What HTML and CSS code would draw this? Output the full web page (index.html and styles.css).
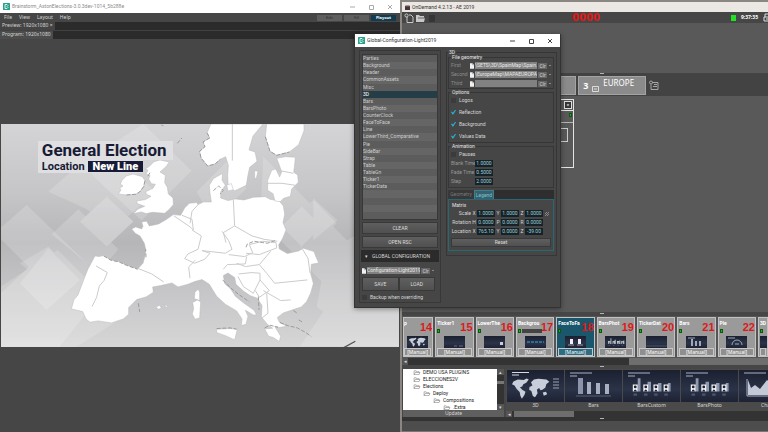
FILE: index.html
```html
<!DOCTYPE html>
<html lang="en">
<head>
<meta charset="utf-8">
<title>Playout desktop</title>
<link rel="stylesheet" href="styles.css">
</head>
<body>
<svg class="defs" aria-hidden="true">
  <defs>
    <linearGradient id="navy" x1="0" y1="0" x2="0" y2="1"><stop offset="0" stop-color="#1b2030"/><stop offset=".6" stop-color="#2b3348"/><stop offset="1" stop-color="#1d2233"/></linearGradient>
    <symbol id="logo" viewBox="0 0 14 14"><rect width="14" height="14" rx="1" fill="#27a18a"/><path d="M4 3h4l2 2-2 2 2 2-2 2H4z" fill="none" stroke="#d9f3ec" stroke-width="2"/></symbol>
    <symbol id="file" viewBox="0 0 10 14"><path d="M0 0h6l4 4v10H0z" fill="#f2f2f2"/><path d="M6 0v4h4" fill="none" stroke="#777"/></symbol>
    <symbol id="folder" viewBox="0 0 16 12"><path d="M1 11V2h5l1 2h6v2M1 11l3-5h11l-2 5z" fill="#fff" stroke="#777" stroke-width="1.3"/></symbol>
    <symbol id="worldmap" viewBox="0 0 100 60"><path d="M2 12l12-5 16 1 8-4 6 3-7 9-8 4-3 6-6 2 6 7 9 5-3 9-7 10-4-8-2-10-8-8-6-10-7-3zM50 14l8-7 12-2 22 2 8 6-8 6-3 10-8 6-5 1-4-6-6 5 2 9-7 11-6-3-4-14-6-3 1-8 8-4zM82 42l9-2 3 7-9 4z" fill="#c9cedb"/></symbol>
    <symbol id="people" viewBox="0 0 120 60"><g fill="#8e98ae"><path d="M22 2h8v38h-8zM50 12h10v28H50zM80 16h10v24H80zM108 16h8v24h-8z"/></g><g fill="#f2f3f6"><path d="M8 20h14v20H8zM38 20h14v20H38zM67 20h14v20H67zM96 20h14v20H96z"/></g><g fill="#1d2233"><circle cx="15" cy="27" r="4"/><circle cx="45" cy="27" r="4"/><circle cx="74" cy="27" r="4"/><circle cx="103" cy="27" r="4"/><path d="M10 40q5-12 10 0zM40 40q5-12 10 0zM69 40q5-12 10 0zM98 40q5-12 10 0z"/></g><path d="M10 46h10v6H10zM40 46h10v6H40zM69 46h10v6H69zM98 46h10v6H98z" fill="#4b556d"/></symbol>
  </defs>
</svg>
<main class="desktop">
  <section class="window playout">
    <header class="titlebar">
      <svg class="logo"><use href="#logo"/></svg>
      <span class="title faint">Brainstorm_AstonElections-3.0.3dev-1014_5b288e</span>
      <svg class="winbtns" viewBox="0 0 45 8"><path d="M1 4h5M20.500 2.500h4v4h-4zM39 2l4 4M43 2l-4 4" fill="none" stroke="#aaa"/></svg>
    </header>
    <nav class="menubar">
      <a href="#">File</a><a href="#">View</a><a href="#">Layout</a><a href="#">Help</a>
      <div class="modes"><button class="off">Edit</button><button class="off">Fill</button><button class="on">Playout</button></div>
    </nav>
    <div class="tabrow"><span class="viewtab">Preview: 1920x1080 ×</span></div>
    <div class="tabrow second"><span class="viewtab">Program: 1920x1080</span></div>
    <div class="stage">
      <div class="video">
        <svg class="map" viewBox="3 12 1194 672" preserveAspectRatio="none">
          <defs><linearGradient id="sky" x1="0" y1="0" x2="0" y2="1"><stop offset="0" stop-color="#d4d4d6"/><stop offset=".3" stop-color="#c6c6c8"/><stop offset=".53" stop-color="#b6b5b8"/><stop offset=".75" stop-color="#c6c6c8"/><stop offset="1" stop-color="#d6d6d7"/></linearGradient></defs>
          <rect x="3" y="12" width="1194" height="672" fill="url(#sky)"/>
          <g fill="#fff" fill-opacity=".17">
            <path d="M430 12l145 140-150 150-110-100-70-70zM80 255l280 270-130 60-230-230v-30zM145 385l150 150-120 150H3V520z"/>
            <path d="M320 230l80 75-80 75-80-75zM235 268l120 120-60 70-140-115zM145 215l170-150 150 150-120 110-90-60zM60 430l85-50 150 150-60 50zM3 500l170-110 200 200-150 95H3z"/>
            <path d="M590 215l90-90 60 80-100 100zM1195 130v210l-110-100zM940 240l70 70-70 70-80-70zM980 400l80-50 137 130v200h-100L950 560zM1000 530l197 150H900zM790 110l330 330-100 100-240-240z"/>
          </g>
          <g fill="#fff" fill-opacity=".18"><path d="M320 230l80 75-80 75-80-75zM905 260l60 60-60 60-60-60zM145 385l95 95-100 90-80-80zM940 235l72 66-72 60z"/></g>
          <g fill="#fff" stroke="#b9b9bc" stroke-width="1.500" stroke-linejoin="round">
            <path d="M462 125l18-5 28 6-10 14-18 16 16 10-2 22 8 14 3 20 14 12 1 20-12 14-14 12-36-3-20 4-14-5-24 5 14-14 20-8-22-8-2-8 26-4 17-10-14-6-2-8 22-10 7-12-12-2-8-14 4-10-12-6 6-10-8-4 12-8z"/>
            <path d="M365 182l14-14 20-6 28 8 8 12-4 18-12 16-12 7-28 2-24-3 8-12-4-6 10-6-8-6z"/>
            <path d="M285 408l12 2 14-3 22 13 24 5 22 10 34 12 16-17 6-22 2-20-4-18-7-12-6-10-14-8-11-13 12-6 18 6 4-8-4-13 15-2 8 14 28-6 24-14 20-14 22 2 12-22 14-14 22-2 4 6 16-8 24 0-4-26-2-24 12-20 28-16-2 20 10 16-14 20 0 18 22 8 22-5 26 3 28-8 36-2 14 8 28 5 12 15 4 25-5 25 9 22-10 25-12 20 2 12 24 14 34-8 14-8 32 10 6 16 8 18-22 4-2 28 8 30-8 28-12 26-16 16-24 8-30 10-18 14 6 14 22 12-22 4-14-4 18 30-4 16-18-12-14-4-12-22 24-2-16-12-18-22 2-34-14-22-22-8-20-14-22-20-4-20-20-14-14 8 4 24 18 16 14 22 22 18 34 24 8 14-10 0-24-14 8 18-6 24-14 4 2-20-16-24-34-20-26-24-22-36-22-14-22 6-20 8-30 8-18-12-34 8-24 4 2 16-22 14-28 8-24 24 0 20-16 14-36 12-40-6-24 4-12-10-10-22-34-8 8-28 12-14 18-48 12-30z"/>
            <path d="M633 12l-12 26 8 16-20 12 6 14-16 14 4 20 20 24 22-6 16-14 16-8 8 26-2 30 2 40 20 6 34-16 4-26 6-28 22-18-6-28-18-6 12-42 30-36z"/>
            <path d="M800 12l-4 38 14 44 20 12 38-10 28-22 16-42 0-20zM830 115l26-5 30 2-3 30-2 15 12 8 2 22-20 20-4 22-20 6-10 10-16-2-6-22-16-10 0-30 12-30 12-4 12 24 6-16-8-22z"/>
            <path d="M595 508l4 10 0 24-16-6 2-20zM578 548l14-8 10 6-3 48-14 4-8-16 4-16zM650 628l40-2 22 2-8 32-26-12-28-10zM764 152l10 2-6 24-4-6zM680 195l14-4 6 18-16 4zM468 562l10-6 6 8-8 4zM492 554l12 4-4 4z"/>
          </g>
          <g fill="none" stroke="#cbcbcf" stroke-width="3" stroke-linejoin="round">
            <path d="M697 12v110M800 190h46l40 6M830 150l50 10M700 240l4 78-34 20 8 30M704 318l52 30 36 10 40 6M570 310l6-36 22-24M522 288l50 34 8 8-4-32-30-12M576 330l28 18-10 40M594 388l-30 14-10 14 30 14 30-12 16-18-24-8 70 8 20-12-10-26-20-28M686 404l48 6 24-12-10-24 40-10 40 4 2 16-52 20-40-4M710 430l26 10 42-6 34-40M740 410l-4 22-54 2-12 14M778 434l22 26 24 30 98-10M716 462l40-4 24 2 0 20-20 40-30-20-16-30M780 480l28 32-30 20-12-20M790 512l52 30 30-2M800 520l4 60-26 20M900 375l24 40 6 44M415 446l40 16 36 24M288 438l34 20-10 24-14 16-8 34-14 28M570 475l-4-34 20-20"/>
          </g>
          <g fill="none" stroke="#909094" stroke-width="2.500" stroke-linejoin="round" stroke-dasharray="12 5">
            <path d="M311 408l22 13 24 5 22 10 34 12M438 412l-1-24M621 38l8 16-20 12 6 14-16 14 4 20 20 24 22-6 16-14M796 50l14 44 20 12 38-10M435 182l-4 18-12 16-12 7-28 2M450 158l-8 14M738 382l4-10 20-8 40 6 24-8M668 480l24 24 22 18 34 24M775 530l2 40M650 626l40-2 20 4M840 608l26 10 26 6 22 12 20 14M794 624l16-8 24 6M640 212l16-14 14 14-10 10M415 550l4 26M880 572l12 8M896 600l10 6"/>
            <path d="M532 70l14-16M484 15l6 2" />
            <path d="M1030 684l36-20" stroke="#555" stroke-width="4" stroke-dasharray="none"/>
          </g>
        </svg>
        <div class="caption">
          <h1>General Election</h1>
          <p><span>Location</span><strong>New Line</strong></p>
        </div>
      </div>
    </div>
  </section>

  <section class="window ondemand">
    <header class="titlebar beige">
      <svg class="logo dim" viewBox="0 0 14 14"><rect y="3" width="14" height="11" fill="#46333c"/><path d="M1 1h12v3H1z" fill="#84666d"/></svg>
      <span class="title">OnDemand 4.2.13 - AE 2019</span>
    </header>
    <div class="toolbar">
      <svg class="tools" viewBox="0 0 34 10"><g fill="none" stroke="#c8c8c8"><path d="M3 3.500V9.500h6V4l-2-2H5"/><circle cx="2.500" cy="2.500" r="1.600"/></g><path d="M12 2h3l1 1h4v2h1l-1 4h-8z" fill="#c8c8c8"/><path d="M14 5h7" stroke="#666"/><path d="M25 2h6v7h-6z" fill="#363636"/></svg>
      <output class="counter">0000</output>
      <div class="status"><i class="led big"></i><time>9:37:35</time><svg class="print" viewBox="0 0 5 9"><path d="M5 1H2v3H1v4h4M2 4h3M3 6h2" fill="none" stroke="#ddd"/></svg></div>
    </div>
    <div class="blank"></div>
    <div class="scenes">
      <i class="grip"></i>
      <div class="scenerow">
        <button class="scene blanktab" aria-label="Scene 2"></button>
        <button class="scene"><b>3</b><svg class="mini" viewBox="0 0 7 6"><path d="M.5.5h6v5h-6zM2 3h3" fill="none" stroke="#ddd"/></svg><span>EUROPE</span></button>
        <svg class="addscene" viewBox="0 0 10 10"><path d="M3 2.500h6v7H2v-5M5 4.500h3M4 6.500h4" fill="none" stroke="#a6a6a6"/><circle cx="2" cy="2.500" r="1.500" fill="none" stroke="#a6a6a6"/></svg>
      </div>
    </div>
    <div class="canvas">
      <div class="node"><div class="nodehead"><button class="nodeclose" aria-label="Close">×</button></div><div class="nodeled"><i class="led"></i></div><div class="nodebody"><div class="slot"></div></div></div>
    </div>
    <div class="splitter"><i class="grip"></i></div>
    <div class="cards">
      <article class="card first"><h2>p</h2><b>14</b><svg class="pic"><rect width="100%" height="100%" fill="url(#navy)"/><use href="#worldmap" x="1" y="1" width="19" height="10"/></svg><button>[Manual]</button></article>
      <article class="card"><h2>Ticker1</h2><i class="led"></i><b>15</b><svg class="pic"><rect width="100%" height="100%" fill="url(#navy)"/><path d="M10 10h3M15 10h4" stroke="#69718a"/></svg><button>[Manual]</button></article>
      <article class="card"><h2>LowerThe</h2><i class="led"></i><b>16</b><svg class="pic"><rect width="100%" height="100%" fill="url(#navy)"/><path d="M16 6h3v3h-3z" fill="#ccd"/></svg><button>[Manual]</button></article>
      <article class="card"><h2>Backgrou</h2><i class="led"></i><i class="bar"></i><b>17</b><svg class="pic"><rect width="100%" height="100%" fill="url(#navy)"/><path d="M2 6h17" stroke="#2e6e94" stroke-width="2" stroke-dasharray="3 1"/></svg><button>[Manual]</button></article>
      <article class="card live"><h2>FaceToFa</h2><i class="led"></i><b>18</b><svg class="pic"><rect width="100%" height="100%" fill="url(#navy)"/><path d="M5 3h3v5H5zM13 3h3v5h-3z" fill="#eef"/><path d="M3 9h6M12 9h6" stroke="#99a"/></svg><button>[Manual]</button></article>
      <article class="card"><h2>BarsPhot</h2><i class="led"></i><b>19</b><svg class="pic"><rect width="100%" height="100%" fill="url(#navy)"/><use href="#people" x="2" y="2" width="18" height="9"/></svg><button>[Manual]</button></article>
      <article class="card"><h2>TickerDat</h2><i class="led"></i><b>20</b><svg class="pic"><rect width="100%" height="100%" fill="url(#navy)"/><path d="M0 10h21" stroke="#4c566c"/></svg><button>[Manual]</button></article>
      <article class="card"><h2>Bars</h2><i class="led"></i><b>21</b><svg class="pic"><rect width="100%" height="100%" fill="url(#navy)"/><path d="M6 10V3M10 10V5M14 10V5" stroke="#9fa7ba" stroke-width="2"/><path d="M2 2h7" stroke="#9fa7ba"/></svg><button>[Manual]</button></article>
      <article class="card"><h2>Pie</h2><i class="led"></i><b>22</b><svg class="pic"><rect width="100%" height="100%" fill="url(#navy)"/><path d="M6 9a5 5 0 0 1 10 0" fill="none" stroke="#9fa7ba" stroke-width="1"/><path d="M2 2h7M9 8h4" stroke="#9fa7ba"/></svg><button>[Manual]</button></article>
      <article class="card last"><h2>3D</h2><i class="led"></i><svg class="pic"><rect width="100%" height="100%" fill="url(#navy)"/></svg><button aria-label="Manual"></button></article>
    </div>
    <div class="hscroll upper"><i class="arrow">◂</i><i class="thumb"></i></div>
    <div class="splitter"><i class="grip"></i></div>
    <div class="browser">
      <div class="treepane">
        <div class="treebox">
          <ul class="tree">
            <li><svg><use href="#folder"/></svg>DEMO USA PLUGINS</li>
            <li><svg><use href="#folder"/></svg>ELECCIONES2V</li>
            <li><svg><use href="#folder"/></svg>Elections
              <ul><li><svg><use href="#folder"/></svg>Deploy
                <ul><li><svg><use href="#folder"/></svg>Compositions
                  <ul><li><svg><use href="#folder"/></svg>.Extra</li></ul></li></ul></li></ul></li>
          </ul>
          <div class="vscroll"><i>▴</i><i class="vthumb"></i><i>▾</i></div>
        </div>
        <button class="update">Update</button>
      </div>
      <div class="gallery">
        <div class="shots">
          <figure><svg viewBox="0 0 57 32" preserveAspectRatio="none"><rect width="57" height="32" fill="url(#navy)"/><path d="M5 2.500h17M5 5h7" stroke="#d5d9e3"/><use href="#worldmap" x="5" y="7" width="38" height="22"/><path d="M46 9h6M46 12h6M46 15h6M46 18h6" stroke="#9aa2b5"/></svg><figcaption>3D</figcaption></figure>
          <figure><svg viewBox="0 0 57 32" preserveAspectRatio="none"><rect width="57" height="32" fill="url(#navy)"/><path d="M5 3h22M5 6h7" stroke="#aab1c2"/><path d="M13 24V8h5v16z" fill="#8b94aa"/><path d="M22 24V12h4v12zM31 24V13h4v11zM40 24V14h4v10z" fill="#a7afc1"/><path d="M11 26h35" stroke="#566078"/></svg><figcaption>Bars</figcaption></figure>
          <figure><svg viewBox="0 0 57 32" preserveAspectRatio="none"><rect width="57" height="32" fill="url(#navy)"/><path d="M5 3h22M5 6h7" stroke="#aab1c2"/><use href="#people" x="7" y="7" width="42" height="22"/></svg><figcaption>BarsCustom</figcaption></figure>
          <figure><svg viewBox="0 0 57 32" preserveAspectRatio="none"><rect width="57" height="32" fill="url(#navy)"/><path d="M5 3h22M5 6h7" stroke="#aab1c2"/><use href="#people" x="7" y="7" width="42" height="22"/></svg><figcaption>BarsPhoto</figcaption></figure>
          <figure><svg viewBox="0 0 57 32" preserveAspectRatio="none"><rect width="57" height="32" fill="url(#navy)"/><path d="M5 3h22M8 9v17h40" stroke="#aab1c2" fill="none"/><path d="M9 25V10l3 8 4-3 5 4 7-9 6 4 9-5v16z" fill="#c3c9d6"/></svg><figcaption>Chart</figcaption></figure>
        </div>
        <div class="hscroll lower"><i class="arrow">◂</i><i class="thumb"></i></div>
      </div>
    </div>
    <div class="splitter low"><i class="grip"></i></div>
    <footer class="foot"></footer>
  </section>

  <section class="window dialog" role="dialog" aria-label="Global-Configuration-Light2019">
    <header class="titlebar">
      <svg class="logo"><use href="#logo"/></svg>
      <span class="title">Global-Configuration-Light2019</span>
      <svg class="winbtns" viewBox="0 0 45 8"><path d="M1 4h5M20.500 2.500h4v4h-4zM39 2l4 4M43 2l-4 4" fill="none" stroke="#444"/></svg>
    </header>
    <div class="dialogbody">
      <div class="side">
        <ul class="list">
          <li>Parties</li><li>Background</li><li>Header</li><li>CommonAssets</li><li>Misc</li><li class="sel">3D</li><li>Bars</li><li>BarsPhoto</li><li>CounterClock</li><li>FaceToFace</li><li>Line</li><li>LowerThird_Comparative</li><li>Pie</li><li>SideBar</li><li>Strap</li><li>Table</li><li>TableGn</li><li>Ticker1</li><li>TickerData</li><li></li><li></li><li></li><li></li>
        </ul>
        <button class="btn">CLEAR</button>
        <button class="btn">OPEN RSC</button>
        <h3 class="section"><span>▾</span>GLOBAL CONFIGURATION</h3>
        <div class="config">
          <div class="filerow"><svg class="file"><use href="#file"/></svg><input class="path" aria-label="Configuration file" value="Configuration-Light2019"><button class="clr">Clr</button><i class="caret"></i></div>
          <div class="pair"><button class="btn">SAVE</button><button class="btn">LOAD</button></div>
          <label class="check"><input type="checkbox">Backup when overriding</label>
        </div>
      </div>
      <fieldset class="group outer">
        <legend>3D</legend>
        <fieldset class="group files">
          <legend>File geometry</legend>
          <div class="filerow"><label for="f1">First</label><svg class="file"><use href="#file"/></svg><input class="path" id="f1" value="\SETS\3D\SpainMap\Spain.fb"><button class="clr">Clr</button><i class="caret"></i></div>
          <div class="filerow"><label for="f2">Second</label><svg class="file"><use href="#file"/></svg><input class="path" id="f2" value="\EuropeMap\MAPAEUROPA.fb"><button class="clr">Clr</button><i class="caret"></i></div>
          <div class="filerow"><label for="f3">Third</label><svg class="file"><use href="#file"/></svg><input class="path" id="f3" value=""><button class="clr">Clr</button><i class="caret"></i></div>
        </fieldset>
        <fieldset class="group options">
          <legend>Options</legend>
          <label class="check"><input type="checkbox">Logos</label>
          <label class="check"><input type="checkbox" checked>Reflection</label>
          <label class="check"><input type="checkbox" checked>Background</label>
          <label class="check"><input type="checkbox" checked>Values Data</label>
        </fieldset>
        <fieldset class="group anim">
          <legend>Animation</legend>
          <label class="check"><input type="checkbox">Pauses</label>
          <div class="numrow"><label for="a1">Blank Time</label><input class="num" id="a1" value="1.0000"></div>
          <div class="numrow"><label for="a2">Fade Time</label><input class="num" id="a2" value="0.5000"></div>
          <div class="numrow"><label for="a3">Step</label><input class="num" id="a3" value="2.0000"></div>
        </fieldset>
        <div class="tabs"><button>Geometry</button><button class="cur">Legend</button></div>
        <div class="tabpanel">
          <fieldset class="group matrix">
            <legend>Matrix</legend>
            <div class="mrow"><span>Scale</span><label for="m1">X</label><input class="num" id="m1" value="1.0000"><label for="m2">Y</label><input class="num" id="m2" value="1.0000"><label for="m3">Z</label><input class="num" id="m3" value="1.0000"><svg class="link" viewBox="0 0 6 6"><path d="M1 5l4-4M1 3l2-2M3 5l2-2" stroke="#888" fill="none"/></svg></div>
            <div class="mrow"><span>Rotation</span><label for="m4">H</label><input class="num" id="m4" value="0.0000"><label for="m5">P</label><input class="num" id="m5" value="0.0000"><label for="m6">R</label><input class="num" id="m6" value="0.0000"></div>
            <div class="mrow"><span>Location</span><label for="m7">X</label><input class="num" id="m7" value="765.10"><label for="m8">Y</label><input class="num" id="m8" value="0.0000"><label for="m9">Z</label><input class="num" id="m9" value="-39.00"></div>
            <button class="btn reset">Reset</button>
          </fieldset>
        </div>
      </fieldset>
    </div>
  </section>
</main>
</body>
</html>
```
FILE: styles.css
```css
* { box-sizing: border-box; }
html, body { height: 100%; }
body { margin: 0; background: #15151f; font: 5px/7px "Noto Sans", sans-serif; color: #d6d6d6; overflow: hidden; }
button, input { font: inherit; color: inherit; margin: 0; padding: 0; border: 0; border-radius: 0; min-width: 0; }
h1, h2, h3, p, ul, figure { margin: 0; padding: 0; font-weight: normal; list-style: none; }
a { color: inherit; text-decoration: none; }
i { font-style: normal; }
svg { display: block; flex: none; }
.defs { position: absolute; width: 0; height: 0; }

.desktop { position: relative; display: grid; grid-template-columns: 400fr 366fr; gap: 2px; height: 100%; background: #8a8782; }
.window { display: flex; flex-direction: column; min-width: 0; min-height: 0; overflow: hidden; background: #464646; }
.titlebar { display: flex; align-items: center; gap: 2px; height: 13px; padding: 0 6px 0 3px; background: #fff; flex: none; font-family: Roboto, sans-serif; }
.title { flex: 1; color: #333; white-space: nowrap; }
.faint { color: #8c8c8c; }
.logo { width: 7px; height: 7px; }
.winbtns { width: 45px; height: 8px; }

/* playout window */
.menubar { display: flex; align-items: center; gap: 7px; height: 9px; padding: 0 4px; flex: none; }
.modes { display: flex; gap: 2px; margin-left: auto; }
.modes button { width: 25px; height: 6px; line-height: 6px; font-size: 4px; }
.off { background: #5e5e5e; color: #2f2f2f; }
.on { background: #123c52; color: #fff; font-weight: bold; }
.tabrow { display: flex; height: 8px; background: #2b2b2b; flex: none; }
.second { height: 9px; border-top: 1px solid #414141; }
.viewtab { padding: 0 2px; background: #444; white-space: nowrap; }
.second .viewtab { background: #4c4c4c; }
.stage { flex: 1; display: flex; align-items: center; padding: 0 1px; min-height: 0; }
.video { position: relative; width: 100%; aspect-ratio: 16 / 9; }
.map { width: 100%; height: 100%; }
.caption { position: absolute; left: 9%; top: 8%; padding-left: 1px; font-family: Roboto, sans-serif; color: #171b35; }
.caption h1 { padding: 0 6px 0 4px; font-size: 17px; line-height: 19px; font-weight: bold; background: #dfdfe1; }
.caption p { display: inline-flex; align-items: center; gap: 3px; height: 13px; padding-left: 4px; font-size: 11px; line-height: 11px; font-weight: bold; background: #dfdfe1; }
.caption strong { padding: 0 5px; background: #171b35; color: #fff; }

/* on-demand window */
.ondemand { margin-top: 2px; background: #595959; }
.beige { height: 10px; background: #ebe7e2; }
.dim { width: 5px; height: 5px; }
.toolbar { display: grid; grid-template-columns: 1fr auto 1fr; align-items: center; height: 11px; padding-left: 2px; background: #464646; flex: none; }
.tools { width: 34px; height: 10px; }
.counter { font: bold 10px/11px "DejaVu Sans", sans-serif; color: #e01818; }
.status { display: flex; align-items: center; justify-content: flex-end; gap: 5px; color: #fff; font-weight: bold; }
.led { display: block; width: 3px; height: 4px; background: #18b418; border: 1px solid #0a5a0a; }
.led.big { width: 5px; height: 6px; border: 0; background: #22e022; }
.print { width: 5px; height: 9px; }
.blank { flex: 50; }
.grip { display: block; width: 4px; height: 1px; margin-left: 54%; background: #b4b4b4; }
.scenes { height: 23px; background: #434343; flex: none; }
.scenerow { display: flex; gap: 2px; padding-top: 2px; margin-left: 29%; }
.scene { position: relative; width: 68px; height: 19px; background: #8b8b8b; border: 1px solid #a4a4a4; display: flex; align-items: center; color: #fff; }
.scene b { font-size: 9px; line-height: 17px; padding-left: 4px; }
.mini { width: 7px; height: 6px; margin: 8px 4px 0; }
.scene span { font-size: 8px; line-height: 11px; align-self: flex-start; }
.addscene { width: 10px; height: 10px; margin: 4px 0 0 1px; }
.canvas { position: relative; flex: 217; }
.node { position: absolute; left: 138px; top: 3px; width: 34px; height: 69px; border: 1px solid #e4e4e4; }
.nodehead { display: flex; justify-content: flex-end; height: 11px; border-bottom: 1px solid #e4e4e4; }
.nodeclose { width: 8px; height: 8px; margin: 1px; border: 1px solid #ddd; background: #333; color: #fff; line-height: 6px; }
.nodeled { display: flex; justify-content: flex-end; height: 12px; padding: 2px 1px; border-bottom: 1px solid #b4b4b4; }
.nodebody { padding: 5px 5px 0 0; }
.slot { height: 14px; border: 1px solid #ccc; }
.splitter { height: 4px; padding-top: 1px; background: #464646; flex: none; }

.cards { display: grid; grid-template-columns: 30fr repeat(8, 38fr) 10fr; gap: 2px; padding: 1px 0 1px 1px; height: 42px; flex: none; background: #555; }
.card { position: relative; display: flex; flex-direction: column; align-items: center; min-width: 0; overflow: hidden; background: #9a9a9a; border: 1px solid #c2c2c2; padding: 0 1px; }
.card h2 { align-self: stretch; height: 18px; padding-top: 2px; font: bold 5px/7px Roboto, sans-serif; color: #fff; white-space: nowrap; }
.card b { position: absolute; right: 0; top: 4px; font: bold 11px/11px "Liberation Sans", sans-serif; color: #e01818; }
.card .led { position: absolute; left: 1px; top: 11px; }
.bar { position: absolute; left: 5px; top: 11px; width: 20px; height: 4px; background: #444; }
.pic { width: 21px; height: 12px; }
.card button { width: 100%; height: 8px; margin-top: auto; border: 1px solid #c8c8c8; background: #8f8f8f; color: #fff; line-height: 6px; }
.live { background: #1a566c; }
.live button { background: #2d6c82; }
.first, .first h2 { padding-left: 0; }
.last { align-items: flex-start; }
.hscroll { display: flex; height: 7px; background: #333; flex: none; }
.arrow { width: 6px; color: #ddd; text-align: center; background: #555; }
.upper .thumb { flex: 0 0 38%; margin-left: auto; background: #6e6e6e; }

.browser { display: grid; grid-template-columns: 102fr 262fr; gap: 2px; height: 48px; flex: none; background: #464646; }
.treepane { display: flex; flex-direction: column; padding-left: 1px; min-width: 0; }
.treebox { display: flex; height: 41px; background: #fff; }
.tree { flex: 1; overflow: hidden; color: #222; padding-left: 10px; font-family: Roboto, sans-serif; }
.tree li { white-space: nowrap; line-height: 7px; }
.tree svg { display: inline-block; width: 8px; height: 5px; margin-right: 2px; vertical-align: top; margin-top: 1px; }
.tree ul { padding-left: 10px; }
.vscroll { display: flex; flex-direction: column; justify-content: space-between; width: 7px; background: #333; text-align: center; }
.vscroll i { height: 6px; line-height: 6px; background: #555; }
.vscroll .vthumb { height: 3px; background: #777; margin-bottom: 14px; }
.update { height: 7px; background: #5f5f5f; }
.gallery { display: flex; flex-direction: column; min-width: 0; overflow: hidden; }
.shots { display: grid; grid-template-columns: repeat(5, 57px); gap: 1px; flex: 1; padding: 1px 0 0 1px; background: #4a4a4a; }
.shots svg { width: 100%; height: 32px; }
.shots figcaption { text-align: center; line-height: 7px; }
.lower { height: 6px; line-height: 6px; }
.lower .thumb { flex: 0 0 23%; background: #6e6e6e; margin-left: 2px; }
.low { background: #333; }
.foot { height: 11px; background: #4d4d4d; border-bottom: 1px solid #777; flex: none; }

/* configuration dialog */
.dialog { position: absolute; left: 354px; top: 34px; width: 207px; border: 1px solid #333; border-top: 0; box-shadow: 0 1px 5px #0006; font-family: Roboto, sans-serif; }
.dialogbody { display: grid; grid-template-columns: 82px 1fr; gap: 5px; padding: 3px 3px 4px 4px; align-items: start; }
.side { display: flex; flex-direction: column; gap: 2px; border: 1px solid #383838; padding: 3px 2px 0; }
.list { display: grid; grid-template-rows: repeat(23, 1fr); height: 166px; background: #5c5c5c; border: 1px solid #383838; color: #cdcdcd; }
.list li { line-height: 7px; }
.list li:nth-child(even) { background: #656565; }
.list li.sel { background: #253d46; color: #fff; }
.btn { height: 12px; background: linear-gradient(#5f5f5f, #505050); border: 1px solid #393939; color: #dcdcdc; }
.section { display: flex; gap: 4px; height: 12px; margin: 0 -1px; padding-left: 4px; font-size: 5px; line-height: 12px; white-space: nowrap; background: #2b2b2b; }
.config { display: flex; flex-direction: column; gap: 2px; padding-top: 2px; margin-bottom: 1px; }
.filerow { display: flex; align-items: center; gap: 1px; height: 9px; }
.file { width: 4px; height: 6px; }
.filerow label { width: 18px; color: #8d8d8d; }
.path { flex: 1; height: 7px; background: #818181; color: #e8e8e8; }
.clr { width: 9px; height: 6px; line-height: 6px; background: #666; }
.caret { margin: 1px 0 0 1px; border: 1px solid transparent; border-top-color: #ccc; }
.config .filerow { padding-right: 4px; }
.pair { display: grid; grid-template-columns: 1fr 1fr; padding-right: 3px; }
.pair .btn { height: 14px; }
.check { display: flex; align-items: center; gap: 3px; height: 8px; }
.check input { appearance: none; width: 5px; height: 5px; background: #3b3b3b; }
.check input:checked { background: #23b5d3; clip-path: polygon(0 50%, 20% 40%, 40% 65%, 85% 0, 100% 15%, 45% 100%, 30% 100%); }
.group { position: relative; min-width: 0; margin: 0; border: 1px solid #363636; padding: 0 2px 2px; }
.group legend { padding: 0 1px; line-height: 7px; color: #e4e4e4; }
.outer { padding: 0 2px 4px 1px; }
.outer > legend { margin-bottom: -1px; line-height: 5px; }
.files { padding-bottom: 0; }
.options { display: grid; gap: 4px; }
.anim { padding-bottom: 1px; }
.anim .check { margin-bottom: 1px; }
.numrow { display: flex; align-items: center; height: 9px; }
.numrow label { width: 24px; color: #9a9a9a; white-space: nowrap; }
.num { width: 18px; height: 7px; background: #162227; color: #9fd0dc; text-align: center; }
.tabs { display: flex; margin-top: 2px; background: #2e2e2e; }
.tabs button { height: 9px; width: 26px; background: #383838; color: #777; }
.tabs .cur { width: 20px; background: #39616d; color: #73c3d4; border: 1px solid #3d7f8f; border-bottom: 0; }
.tabpanel { border: 1px solid #2b6673; padding: 2px 1px; }
.matrix { padding: 0 1px 1px; border: 0; }
.mrow { display: flex; align-items: center; height: 9px; }
.mrow span { width: 20px; text-align: right; }
.mrow label { width: 6px; text-align: center; }
.link { width: 6px; height: 6px; margin-left: 1px; }
.reset { width: 100%; height: 9px; line-height: 7px; margin-top: 2px; }
```
